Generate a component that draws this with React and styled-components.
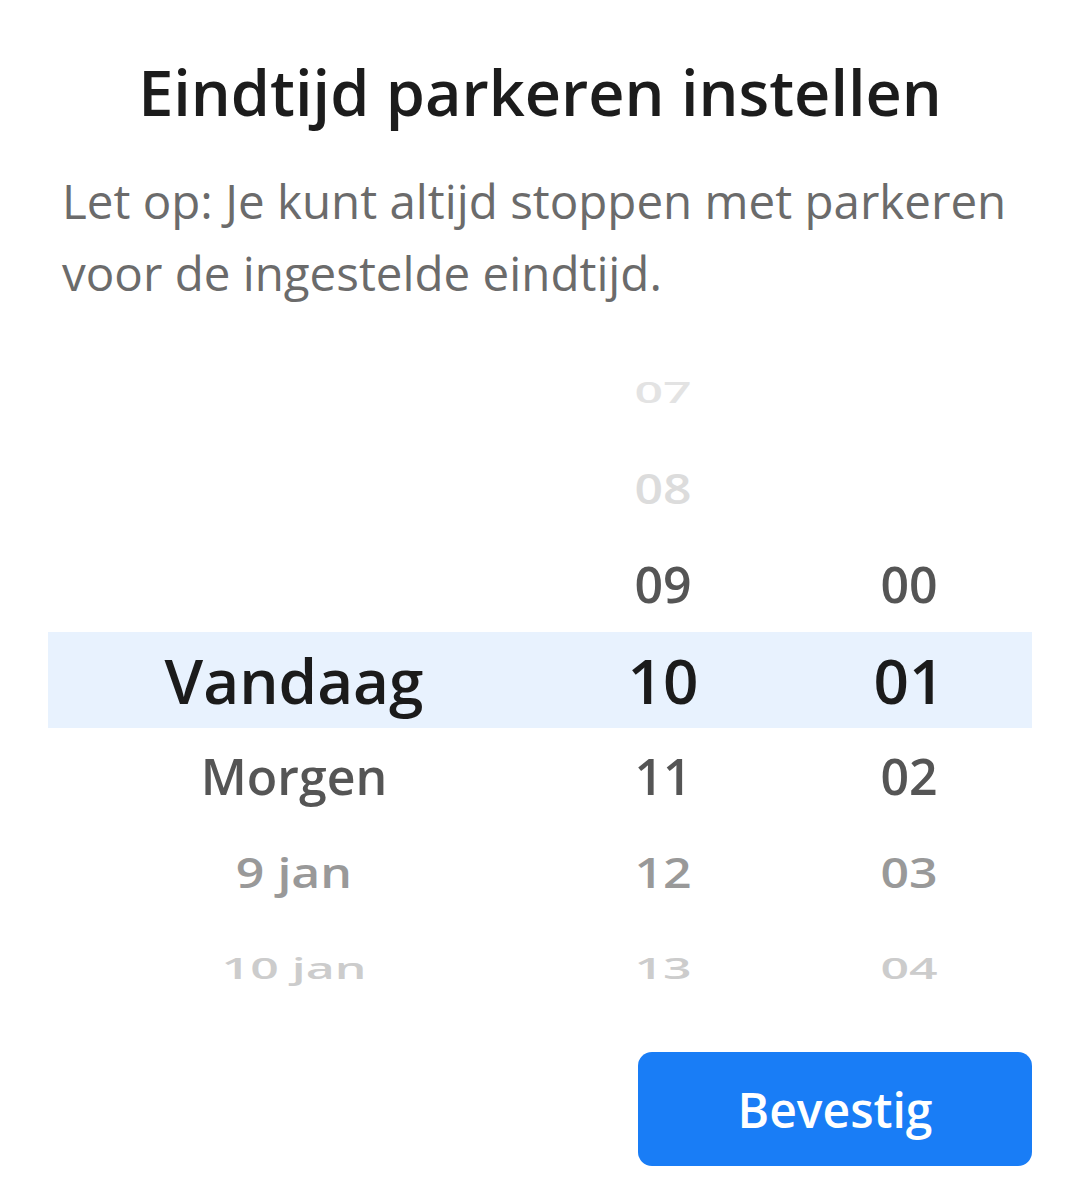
import React from 'react';
import styled, { createGlobalStyle } from 'styled-components';

const GlobalStyle = createGlobalStyle`
  html, body {
    margin: 0;
    padding: 0;
    background: #fff;
    font-family: "Open Sans", "Noto Sans", sans-serif;
  }
`;

const Sheet = styled.div`
  width: 1080px;
  height: 1194px;
  box-sizing: border-box;
  padding: 48px 48px 0;
  display: flex;
  flex-direction: column;
`;

const Title = styled.h1`
  margin: 0;
  text-align: center;
  font-size: 63px;
  line-height: 88px;
  font-weight: 600;
  color: #1c1c1c;
`;

const Note = styled.p`
  margin: 29px 0 0;
  padding: 0 14px;
  font-size: 47.5px;
  line-height: 72px;
  font-weight: 400;
  color: #6b6b6b;
`;

const Wheel = styled.div`
  position: relative;
  margin-top: 35px;
  display: grid;
  grid-template-columns: 2fr 1fr 1fr;
`;

const Band = styled.div`
  position: absolute;
  left: 0;
  right: 0;
  top: 288px;
  height: 96px;
  background: #e8f2fe;
`;

const Column = styled.div`
  position: relative;
  display: flex;
  flex-direction: column;
`;

const colours = {
  up: ['#1b1b1b', '#555555', '#dcdcdc', '#e3e3e3'],
  down: ['#1b1b1b', '#555555', '#999999', '#cccccc'],
};
const squash = [1, 1, 0.84, 0.56];

const Cell = styled.div`
  height: 96px;
  display: flex;
  align-items: center;
  justify-content: center;
  font-size: ${p => (p.$dist === 0 ? '62px' : '50px')};
  font-weight: 600;
  color: ${p => colours[p.$side][p.$dist]};
  transform: scaleY(${p => squash[p.$dist]});
  white-space: nowrap;
`;

const Footer = styled.div`
  margin-top: 36px;
  display: flex;
  justify-content: flex-end;
`;

const Confirm = styled.button`
  width: 394px;
  height: 114px;
  border: none;
  border-radius: 14px;
  background: #197df6;
  color: #fff;
  font-family: "Open Sans", "Noto Sans", sans-serif;
  font-size: 48px;
  font-weight: 600;
  cursor: pointer;
`;

const SELECTED = 3;

const columns = [
  ['', '', '', 'Vandaag', 'Morgen', '9 jan', '10 jan'],
  ['07', '08', '09', '10', '11', '12', '13'],
  ['', '', '00', '01', '02', '03', '04'],
];

function PickerColumn({ items }) {
  return (
    <Column>
      {items.map((item, i) => {
        const dist = Math.abs(i - SELECTED);
        return (
          <Cell key={i} $dist={dist} $side={i < SELECTED ? 'up' : 'down'}>
            {item}
          </Cell>
        );
      })}
    </Column>
  );
}

export default function App() {
  return (
    <>
      <GlobalStyle />
      <Sheet>
        <Title>Eindtijd parkeren instellen</Title>
        <Note>Let op: Je kunt altijd stoppen met parkeren voor de ingestelde eindtijd.</Note>
        <Wheel>
          <Band />
          {columns.map((items, i) => (
            <PickerColumn key={i} items={items} />
          ))}
        </Wheel>
        <Footer>
          <Confirm>Bevestig</Confirm>
        </Footer>
      </Sheet>
    </>
  );
}
